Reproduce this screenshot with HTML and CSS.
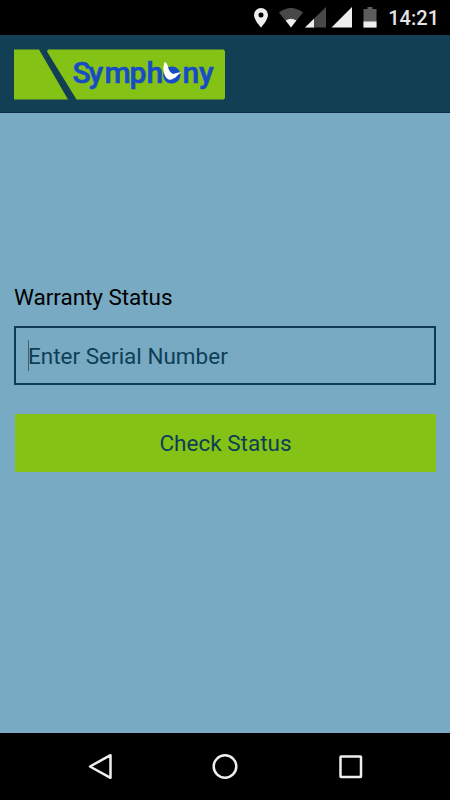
FILE: index.html
```html
<!DOCTYPE html>
<html lang="en">
<head>
  <meta charset="UTF-8" />
  <meta name="viewport" content="width=device-width, initial-scale=1" />
  <title>Warranty Status</title>
  <link rel="stylesheet" href="styles.css">
</head>
<body>
  <div class="status-bar">
    <svg class="status-icons" width="126" height="22" viewBox="0 0 126 22">
      <!-- location -->
      <path fill="#eee" fill-rule="evenodd" d="M8 1a7 7 0 0 0-7 7c0 5 7 12.500 7 12.500S15 13 15 8a7 7 0 0 0-7-7zm0 4.500a2.500 2.500 0 1 1 0 5 2.500 2.500 0 0 1 0-5z"/>
      <!-- wifi -->
      <path fill="#484848" d="M38 20.500 26 5.500Q38-3.500 50 5.500z"/>
      <path fill="#eee" d="M38 20.500 32.700 13.500Q38 10 43.300 13.500z"/>
      <!-- signal, sim 1 and sim 2 -->
      <path fill="#484848" d="M52 20.500 73 0v20.500z"/>
      <path fill="#eee" d="M52 20.500 61 11.800v8.700z"/>
      <path fill="#eee" d="M78.500 20.500 99 0v20.500z"/>
      <!-- battery -->
      <path fill="#5c5c5c" d="M110.500 2h4V0h5v2h4v18.500h-13z"/>
      <path fill="#eee" d="M110.500 14.500h13v6h-13z"/>
    </svg>
    <span class="clock">14:21</span>
  </div>

  <header>
    <svg class="logo" width="211" height="51" viewBox="0 0 211 51">
      <path fill="#84c216" d="M0 .5H25L54 50.500H0z"/>
      <path fill="#84c216" d="M34 .5H209.500L211 2V49L209.500 50.500H62.500L33 2.500z"/>
      <text class="logo-text" y="34" x="58.500 74.500 90.500 115.500 132.500 148.500 168.500 185">Symphony</text>
      <!-- bird over the o -->
      <circle cx="158" cy="26" r="8.500" fill="#164cc4"/>
      <path fill="#fff" d="M150.500 13q3 1 3.500 5 1 5 5 7 3-1 8.500-2-4 3-6 5.500-2 1-4 2-3 1-5.500-2-4.500-7-1.500-15.500z"/>
    </svg>
  </header>

  <main>
    <label class="label" for="serial">Warranty Status</label>
    <div class="field">
      <span class="caret"></span>
      <input id="serial" type="text" placeholder="Enter Serial Number">
    </div>
    <button type="button">Check Status</button>
  </main>

  <nav>
    <svg width="30" height="30" viewBox="0 0 30 30"><path d="M5 15.500 25.500 4.200v22.600z"/></svg>
    <svg width="30" height="30" viewBox="0 0 30 30"><circle cx="15" cy="15.500" r="11.300"/></svg>
    <svg width="30" height="30" viewBox="0 0 30 30"><rect x="5.500" y="5.500" width="20.500" height="20.500" rx=".5"/></svg>
  </nav>
</body>
</html>
```
FILE: styles.css
```css
* {
  box-sizing: border-box;
}
body {
  display: flex;
  flex-direction: column;
  height: 800px;
  margin: 0;
  background-color: #78aac3;
  font-family: Roboto, sans-serif;
  font-size: 22.500px;
}
.status-bar {
  display: flex;
  align-items: center;
  justify-content: flex-end;
  gap: 9px;
  height: 35px;
  padding-right: 11px;
  background-color: #000;
}
.clock {
  color: #e4e4e4;
  font-size: 20px;
  font-weight: 500;
  line-height: 35px;
  padding-top: 1px;
}
header {
  height: 78px;
  padding: 14px;
  background-color: #133f54;
  border-bottom: 1px solid #082b44;
}
.logo {
  display: block;
}
.logo-text {
  fill: #164cc4;
  font-size: 30px;
  font-weight: 500;
  stroke: #164cc4;
  stroke-width: .6;
}
main {
  flex: 1;
  display: flex;
  flex-direction: column;
  padding: 170px 14px 0;
}
.label {
  color: #000;
  line-height: 28px;
  letter-spacing: -0.05px;
  margin-bottom: 15px;
}
.field {
  display: flex;
  align-items: center;
  height: 59px;
  padding: 0 12px;
  border: 2px solid #0e3b53;
}
.caret {
  width: 1px;
  height: 31px;
  background-color: #45616f;
}
input {
  flex: 1;
  min-width: 0;
  margin-left: -1px;
  padding: 0;
  border: 0;
  outline: 0;
  background: none;
  color: #0e3f57;
  font: inherit;
}
input::placeholder {
  color: #0e3f57;
}
button {
  height: 58px;
  margin: 29px 0 0 1px;
  padding: 0;
  border: 0;
  background-color: #84c216;
  color: #0e3f57;
  font: inherit;
}
nav {
  display: flex;
  align-items: center;
  justify-content: center;
  gap: 95px;
  height: 67px;
  padding-bottom: 2px;
  background-color: #000;
}
nav svg {
  fill: none;
  stroke: #eee;
  stroke-width: 2.500;
  stroke-linejoin: round;
}
```
